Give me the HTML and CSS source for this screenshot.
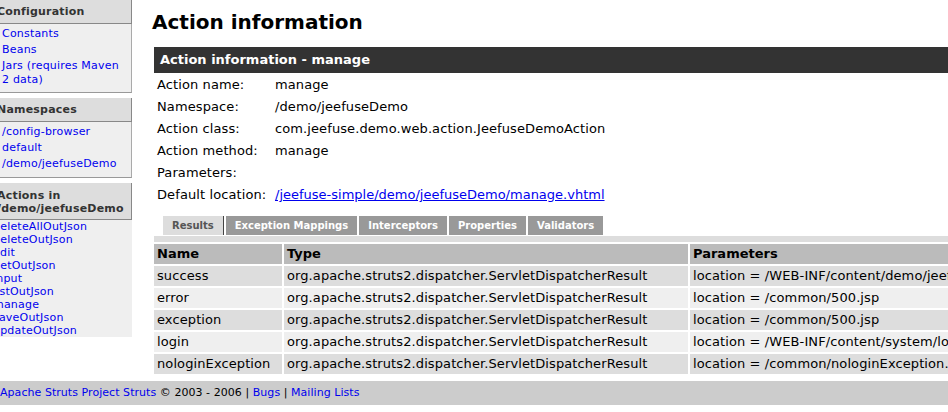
FILE: index.html
```html
<!DOCTYPE html>
<html>
<head>
<meta charset="utf-8">
<title>Action information</title>
<link rel="stylesheet" href="styles.css">
</head>
<body>
<div class="layout">
  <aside class="sidebar">
    <section class="box">
      <div class="box-head"><span class="box-title">Configuration</span></div>
      <ul class="box-list">
        <li><a href="#">Constants</a></li>
        <li><a href="#">Beans</a></li>
        <li><a href="#">Jars (requires Maven 2 data)</a></li>
      </ul>
    </section>
    <section class="box">
      <div class="box-head"><span class="box-title">Namespaces</span></div>
      <ul class="box-list box-list--roomy">
        <li><a href="#">/config-browser</a></li>
        <li><a href="#">default</a></li>
        <li><a href="#">/demo/jeefuseDemo</a></li>
      </ul>
    </section>
    <section class="box">
      <div class="box-head box-head--tall"><span class="box-title">Actions in /demo/jeefuseDemo</span></div>
      <ul class="box-list box-list--actions">
        <li><a href="#">deleteAllOutJson</a></li>
        <li><a href="#">deleteOutJson</a></li>
        <li><a href="#">edit</a></li>
        <li><a href="#">getOutJson</a></li>
        <li><a href="#">input</a></li>
        <li><a href="#">listOutJson</a></li>
        <li><a href="#">manage</a></li>
        <li><a href="#">saveOutJson</a></li>
        <li><a href="#">updateOutJson</a></li>
      </ul>
    </section>
  </aside>
  <main class="content">
    <h1 class="page-title">Action information</h1>
    <div class="panel-head">Action information - manage</div>
    <dl class="info">
      <dt>Action name:</dt><dd>manage</dd>
      <dt>Namespace:</dt><dd>/demo/jeefuseDemo</dd>
      <dt>Action class:</dt><dd>com.jeefuse.demo.web.action.JeefuseDemoAction</dd>
      <dt>Action method:</dt><dd>manage</dd>
      <dt>Parameters:</dt><dd></dd>
      <dt>Default location:</dt><dd><a class="info-link" href="#">/jeefuse-simple/demo/jeefuseDemo/manage.vhtml</a></dd>
    </dl>
    <div class="tabs">
      <span class="tab tab--active">Results</span>
      <span class="tab">Exception Mappings</span>
      <span class="tab">Interceptors</span>
      <span class="tab">Properties</span>
      <span class="tab">Validators</span>
    </div>
    <div class="tab-strip"></div>
    <table class="results">
      <thead>
        <tr>
          <th class="col-name">Name</th>
          <th class="col-type">Type</th>
          <th class="col-params">Parameters</th>
        </tr>
      </thead>
      <tbody>
        <tr class="row-odd"><td>success</td><td>org.apache.struts2.dispatcher.ServletDispatcherResult</td><td>location = /WEB-INF/content/demo/jeefuseDemo/manage.vhtml</td></tr>
        <tr class="row-even"><td>error</td><td>org.apache.struts2.dispatcher.ServletDispatcherResult</td><td>location = /common/500.jsp</td></tr>
        <tr class="row-odd"><td>exception</td><td>org.apache.struts2.dispatcher.ServletDispatcherResult</td><td>location = /common/500.jsp</td></tr>
        <tr class="row-even"><td>login</td><td>org.apache.struts2.dispatcher.ServletDispatcherResult</td><td>location = /WEB-INF/content/system/login.jsp</td></tr>
        <tr class="row-odd"><td>nologinException</td><td>org.apache.struts2.dispatcher.ServletDispatcherResult</td><td>location = /common/nologinException.jsp</td></tr>
      </tbody>
    </table>
  </main>
</div>
<footer class="footer">
  <a href="#">Apache Struts Project</a> <a href="#">Struts</a> © 2003 - 2006 | <a href="#">Bugs</a> | <a href="#">Mailing Lists</a>
</footer>
</body>
</html>
```

FILE: styles.css
```css
html, body {
  margin: 0;
  padding: 0;
  overflow: hidden;
  background: #fff;
}

body {
  width: 948px;
  font-family: "DejaVu Sans", Verdana, sans-serif;
  font-size: 13px;
  letter-spacing: 0.1px;
  color: #000;
}

a {
  color: #0000ee;
  text-decoration: none;
}

.layout {
  display: flex;
  align-items: flex-start;
  gap: 22px;
}

/* Sidebar */
.sidebar {
  flex: 0 0 132px;
  width: 132px;
  letter-spacing: 0.2px;
}

.box {
  margin-bottom: 5px;
  overflow: hidden;
}

.box-head {
  background: #dddddd;
  border-right: 1px solid #888;
  border-bottom: 1px solid #888;
  padding: 5px 6px 5px 0;
  font-size: 11px;
  line-height: 13px;
  font-weight: bold;
  color: #333;
}

.box-head--tall {
  padding: 6px 6px 4px 0;
}

.box-title {
  display: block;
  margin-left: -3px;
}

.box-list {
  list-style: none;
  margin: 0;
  padding: 2px 6px 4px 2px;
  background: #efefef;
  border-right: 1px solid #aaa;
  border-bottom: 1px solid #999;
  font-size: 11px;
  line-height: 14px;
}

.box-list li {
  padding: 1px 0;
}

.box-list--roomy {
  padding-bottom: 5px;
}

.box-list--actions {
  padding: 0 6px 0 0;
  border: 0;
  line-height: 13px;
}

.box-list--actions li {
  padding: 0;
  margin-left: -7px;
  white-space: nowrap;
}

/* Main content */
.content {
  flex: 0 0 auto;
  width: 840px;
}

.page-title {
  margin: 10px 0 13px -2px;
  font-size: 20px;
  line-height: 24px;
  font-weight: bold;
  letter-spacing: 0;
}

.panel-head {
  background: #333;
  color: #fff;
  font-weight: bold;
  font-size: 13px;
  line-height: 26px;
  padding-left: 6px;
  letter-spacing: 0;
}

.info {
  display: grid;
  grid-template-columns: 121px 1fr;
  grid-auto-rows: 22px;
  margin: 1px 0 0;
  line-height: 22px;
}

.info dt {
  padding-left: 3px;
}

.info dd {
  margin: 0;
  white-space: nowrap;
}

.info-link {
  text-decoration: underline;
  letter-spacing: 0;
}

.tabs {
  display: flex;
  gap: 2px;
  margin: 10px 0 1px 9px;
  font-size: 10px;
  font-weight: bold;
  line-height: 19px;
  letter-spacing: 0;
}

.tab {
  background: #999;
  color: #fff;
  padding: 0 9px;
  white-space: nowrap;
}

.tab--active {
  background: #dddddd;
  color: #555;
  border-right: 1px solid #444;
}

.tab-strip {
  height: 6px;
  background: #dddddd;
}

.results {
  border-collapse: separate;
  border-spacing: 2px;
  margin-left: -2px;
  table-layout: fixed;
  width: 844px;
}

.results th,
.results td {
  box-sizing: border-box;
  padding: 0 3px;
  height: 20px;
  line-height: 20px;
  text-align: left;
  white-space: nowrap;
  overflow: hidden;
}

.results th {
  background: #bbbbbb;
  font-weight: bold;
  letter-spacing: 0;
}

.col-name {
  width: 128px;
}

.col-type {
  width: 404px;
}

.row-odd td {
  background: #dddddd;
}

.row-even td {
  background: #efefef;
}

/* Footer */
.footer {
  margin-top: 5px;
  background: #cccccc;
  font-size: 11px;
  line-height: 24px;
  letter-spacing: 0.05px;
  white-space: nowrap;
}
```
